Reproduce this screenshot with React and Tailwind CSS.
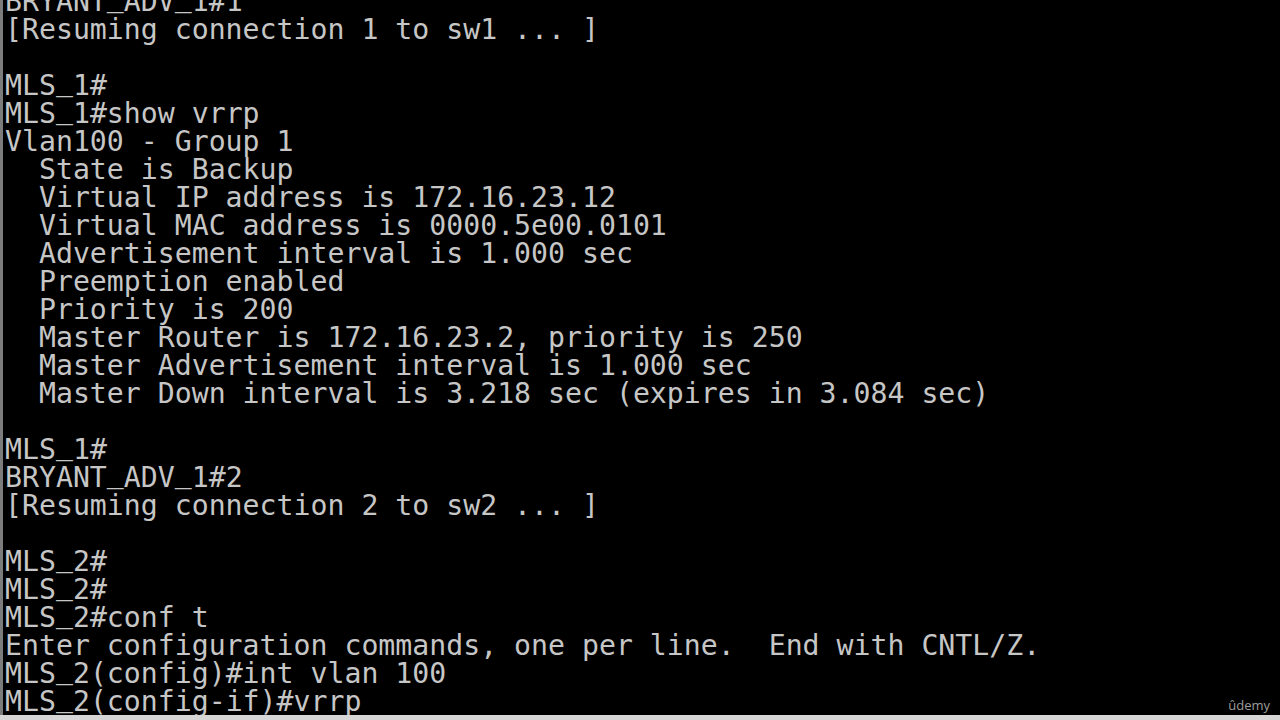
const lines = [
  "BRYANT_ADV_1#1",
  "[Resuming connection 1 to sw1 ... ]",
  "",
  "MLS_1#",
  "MLS_1#show vrrp",
  "Vlan100 - Group 1",
  "  State is Backup",
  "  Virtual IP address is 172.16.23.12",
  "  Virtual MAC address is 0000.5e00.0101",
  "  Advertisement interval is 1.000 sec",
  "  Preemption enabled",
  "  Priority is 200",
  "  Master Router is 172.16.23.2, priority is 250",
  "  Master Advertisement interval is 1.000 sec",
  "  Master Down interval is 3.218 sec (expires in 3.084 sec)",
  "",
  "MLS_1#",
  "BRYANT_ADV_1#2",
  "[Resuming connection 2 to sw2 ... ]",
  "",
  "MLS_2#",
  "MLS_2#",
  "MLS_2#conf t",
  "Enter configuration commands, one per line.  End with CNTL/Z.",
  "MLS_2(config)#int vlan 100",
  "MLS_2(config-if)#vrrp",
];

// underscores in this font sit too low, lift them to match the console font
function Line({ text }) {
  const parts = text.split("_");
  return (
    <div className="h-[28px]">
      {parts.map((p, i) => (
        <span key={i}>
          {i > 0 && <span className="relative -top-[5px]">_</span>}
          {p}
        </span>
      ))}
    </div>
  );
}

export default function App() {
  return (
    <div className="relative flex h-[720px] w-[1280px] flex-col overflow-hidden bg-black">
      <div className="flex-1 overflow-hidden border-l-[3px] border-[#7c7c7c] pl-[2px]">
        <div
          className="-mt-[12px] whitespace-pre text-[28.2px] leading-[28px] text-[#c6c6c6]"
          style={{ fontFamily: '"DejaVu Sans Mono", monospace' }}
        >
          {lines.map((line, i) => (
            <Line key={i} text={line} />
          ))}
        </div>
      </div>
      <div className="h-[5px] bg-[#d6d6d6]"></div>
      <div
        className="absolute bottom-[8px] right-[10px] text-[13px] leading-none text-[#9c9c9c]"
        style={{ fontFamily: '"Open Sans", sans-serif' }}
      >
        ûdemy
      </div>
    </div>
  );
}
